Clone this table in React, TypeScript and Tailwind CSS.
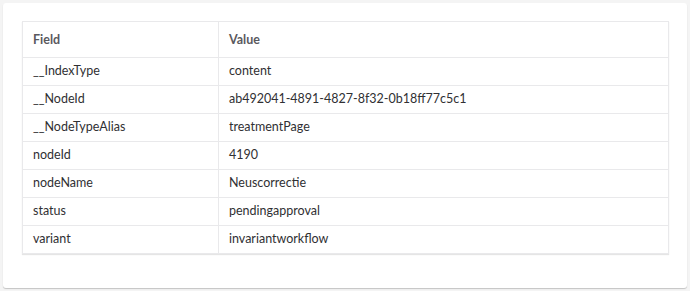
import React from "react";

const rows: [string, string][] = [
  ["__IndexType", "content"],
  ["__NodeId", "ab492041-4891-4827-8f32-0b18ff77c5c1"],
  ["__NodeTypeAlias", "treatmentPage"],
  ["nodeId", "4190"],
  ["nodeName", "Neuscorrectie"],
  ["status", "pendingapproval"],
  ["variant", "invariantworkflow"],
];

export default function App() {
  return (
    <div
      className="w-[690px] h-[291px] bg-[#f4f4f4] p-[3px]"
      style={{ fontFamily: "Lato, 'Noto Sans', sans-serif" }}
    >
      <div className="h-[285px] w-[684px] bg-white rounded-[3px] shadow-[0_1px_1px_rgba(0,0,0,0.2)] pl-[19px] pr-[18px] pt-[18px]">
        <table className="w-[647px] border-collapse text-[12.5px] text-[#303033] shadow-[0_1px_1px_rgba(0,0,0,0.1)]">
          <thead>
            <tr className="h-[36px]">
              <th className="w-[196px] border border-[#e9e9eb] text-left font-bold text-[#5a595e] pl-[10px] pt-[2px] pb-0">
                Field
              </th>
              <th className="border border-[#e9e9eb] text-left font-bold text-[#5a595e] pl-[10px] pt-[2px] pb-0">
                Value
              </th>
            </tr>
          </thead>
          <tbody>
            {rows.map(([k, v]) => (
              <tr key={k} className="h-[28px]">
                <td className="border border-[#e9e9eb] pl-[10px] py-0">{k}</td>
                <td className="border border-[#e9e9eb] pl-[10px] py-0">{v}</td>
              </tr>
            ))}
          </tbody>
        </table>
      </div>
    </div>
  );
}
